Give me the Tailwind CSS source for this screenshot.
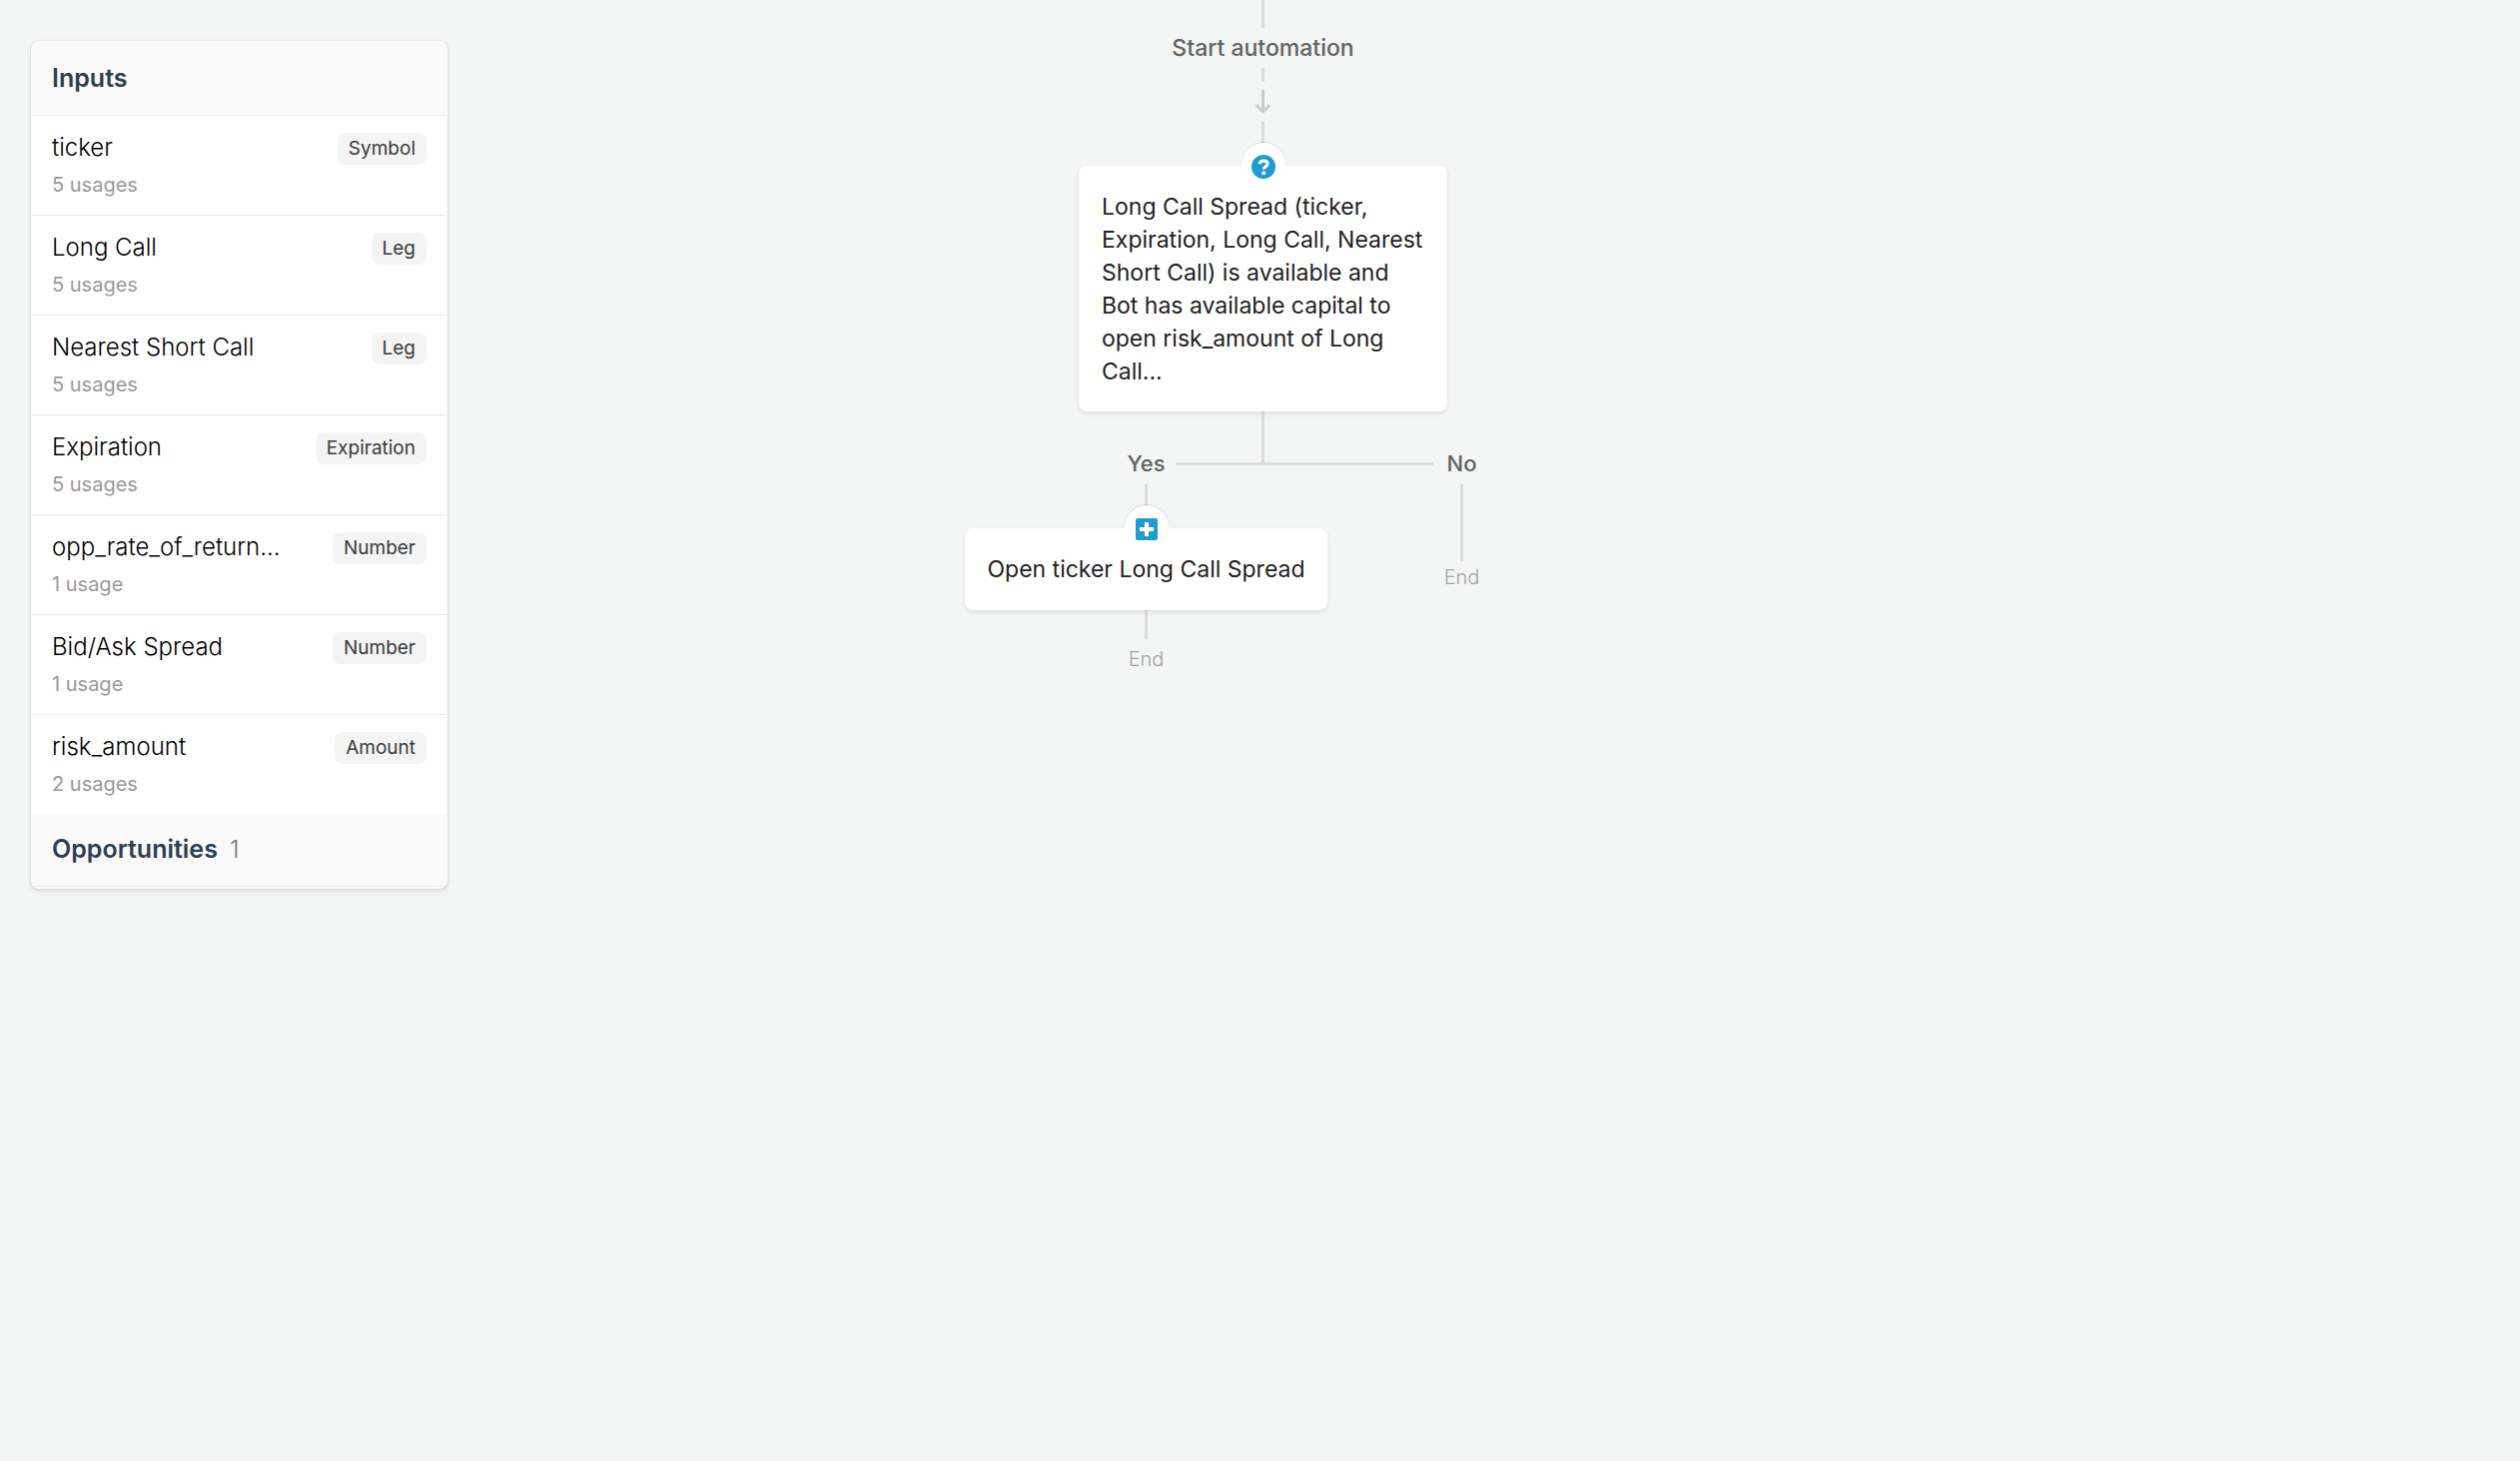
<!DOCTYPE html>
<html lang="en">
<head>
    <meta charset="UTF-8">
    <meta name="viewport" content="width=device-width, initial-scale=1.0">
    <title>Automation Editor</title>
    <script src="https://cdn.jsdelivr.net/npm/@tailwindcss/browser@4"></script>
</head>
<body class="relative min-h-screen bg-[#f4f6f5] font-['Inter',sans-serif] text-black">
    <!-- Floating inputs panel -->
    <aside class="absolute left-[31px] top-[41px] w-[417px] overflow-hidden rounded-lg border border-white bg-white pb-px shadow-[0_0_0_1px_rgba(0,0,0,0.04),0_2px_5px_rgba(0,0,0,0.12)]">
        <h2 class="box-content flex h-[73px] items-center border-b border-[#e8e8e8] bg-[#fafafa] px-5 text-[25px] font-semibold text-[#2c3e56]">Inputs</h2>
        <ul class="divide-y divide-[#e8e8e8]">
            <li class="flex items-start justify-between px-5 py-4">
                <div>
                    <h3 class="text-2xl leading-8 font-light">ticker</h3>
                    <p class="mt-[7px] text-xl text-[#999]">5 usages</p>
                </div>
                <span class="mt-px rounded-lg bg-[#f4f4f4] px-[11px] text-[19px] leading-8 text-[#3a3a3a]">Symbol</span>
            </li>
            <li class="flex items-start justify-between px-5 py-4">
                <div>
                    <h3 class="text-2xl leading-8 font-light">Long Call</h3>
                    <p class="mt-[7px] text-xl text-[#999]">5 usages</p>
                </div>
                <span class="mt-px rounded-lg bg-[#f4f4f4] px-[11px] text-[19px] leading-8 text-[#3a3a3a]">Leg</span>
            </li>
            <li class="flex items-start justify-between px-5 py-4">
                <div>
                    <h3 class="text-2xl leading-8 font-light">Nearest Short Call</h3>
                    <p class="mt-[7px] text-xl text-[#999]">5 usages</p>
                </div>
                <span class="mt-px rounded-lg bg-[#f4f4f4] px-[11px] text-[19px] leading-8 text-[#3a3a3a]">Leg</span>
            </li>
            <li class="flex items-start justify-between px-5 py-4">
                <div>
                    <h3 class="text-2xl leading-8 font-light">Expiration</h3>
                    <p class="mt-[7px] text-xl text-[#999]">5 usages</p>
                </div>
                <span class="mt-px rounded-lg bg-[#f4f4f4] px-[11px] text-[19px] leading-8 text-[#3a3a3a]">Expiration</span>
            </li>
            <li class="flex items-start justify-between px-5 py-4">
                <div>
                    <h3 class="text-2xl leading-8 font-light">opp_rate_of_return...</h3>
                    <p class="mt-[7px] text-xl text-[#999]">1 usage</p>
                </div>
                <span class="mt-px rounded-lg bg-[#f4f4f4] px-[11px] text-[19px] leading-8 text-[#3a3a3a]">Number</span>
            </li>
            <li class="flex items-start justify-between px-5 py-4">
                <div>
                    <h3 class="text-2xl leading-8 font-light">Bid/Ask Spread</h3>
                    <p class="mt-[7px] text-xl text-[#999]">1 usage</p>
                </div>
                <span class="mt-px rounded-lg bg-[#f4f4f4] px-[11px] text-[19px] leading-8 text-[#3a3a3a]">Number</span>
            </li>
            <li class="flex items-start justify-between px-5 py-4">
                <div>
                    <h3 class="text-2xl leading-8 font-light">risk_amount</h3>
                    <p class="mt-[7px] text-xl text-[#999]">2 usages</p>
                </div>
                <span class="mt-px rounded-lg bg-[#f4f4f4] px-[11px] text-[19px] leading-8 text-[#3a3a3a]">Amount</span>
            </li>
        </ul>
        <h2 class="flex h-[73px] items-center gap-3 border-b border-[#e8e8e8] bg-[#fafafa] px-5 text-[25px] font-semibold text-[#2c3e56]">
            Opportunities
            <span class="text-2xl font-light text-[#777]">1</span>
        </h2>
    </aside>

    <!-- Automation flow -->
    <main class="flex flex-col items-center pl-[6px]">
        <div class="h-7 w-[3px] bg-[#dcdcdc]"></div>
        <p class="text-[23px] leading-10 font-medium text-[#636363]">Start automation</p>
        <div class="h-3.5 w-[3px] bg-[#dcdcdc]"></div>
        <svg class="my-2 h-6 w-[17px]" viewBox="0 0 17 24" fill="none" stroke="#cccccc" stroke-width="3">
            <path d="M8.500 0V21.500M1.500 15L8.500 22L15.500 15"/>
        </svg>
        <div class="h-11 w-[3px] bg-[#dcdcdc]"></div>

        <div class="relative w-[369px] rounded-lg bg-white px-[23px] pt-[25px] pb-[23px] shadow-[0_2px_5px_rgba(0,0,0,0.1)]">
            <span class="absolute -top-[23px] left-1/2 flex size-11 -translate-x-1/2 items-center justify-center rounded-full bg-linear-to-b from-white from-50% to-white shadow-[0_-1px_1px_rgba(0,0,0,0.12)]">
                <svg class="mt-1 size-6" viewBox="0 0 24 24">
                    <circle cx="12" cy="12" r="12" fill="#1f9bcf"/>
                    <path d="M8 9.200C8.600 6.900 10 6 12.200 6C14.600 6 16.100 7.300 16.100 9.100C16.100 11.700 12.300 11.700 12.300 14.500" fill="none" stroke="#fff" stroke-width="3.200"/>
                    <circle cx="12.200" cy="18.300" r="2" fill="#fff"/>
                </svg>
            </span>
            <p class="text-[23px] leading-[33px] text-[#222]">Long Call Spread (ticker,<br>Expiration, Long Call, Nearest<br>Short Call) is available and<br>Bot has available capital to<br>open risk_amount of Long<br>Call...</p>
        </div>
        <div class="h-[51px] w-[3px] bg-[#dcdcdc]"></div>

        <!-- Branch labels, joined by the crossbar -->
        <div class="-mt-[19px] ml-[81px] flex h-[41px] items-center text-[22px] font-medium text-[#636363]">
            <span class="w-[59px] text-center">Yes</span>
            <div class="h-[3px] w-[258px] bg-[#dcdcdc]"></div>
            <span class="w-[57px] text-center">No</span>
        </div>

        <div class="ml-[35px] flex items-start">
            <div class="flex w-[363px] flex-col items-center">
                <div class="h-11 w-[3px] bg-[#dcdcdc]"></div>
                <div class="relative w-full rounded-lg bg-white pt-[25px] pb-6 text-center shadow-[0_2px_5px_rgba(0,0,0,0.1)]">
                    <span class="absolute -top-[23px] left-1/2 flex size-11 -translate-x-1/2 items-center justify-center rounded-full bg-white shadow-[0_-1px_1px_rgba(0,0,0,0.12)]">
                        <svg class="mt-1 size-[22px]" viewBox="0 0 22 22">
                            <rect width="22" height="22" rx="2" fill="#1f9bcf"/>
                            <path d="M11 4V18M4 11H18" stroke="#fff" stroke-width="4"/>
                        </svg>
                    </span>
                    <p class="text-[23px] leading-[33px] text-[#222]">Open ticker Long Call Spread</p>
                </div>
                <div class="h-[29px] w-[3px] bg-[#dcdcdc]"></div>
                <p class="mt-1 text-xl leading-8 font-light text-[#a3a3a3]">End</p>
            </div>
            <div class="flex w-[269px] flex-col items-center">
                <div class="h-[77px] w-[3px] bg-[#dcdcdc]"></div>
                <p class="text-xl leading-8 font-light text-[#a3a3a3]">End</p>
            </div>
        </div>
    </main>
</body>
</html>
